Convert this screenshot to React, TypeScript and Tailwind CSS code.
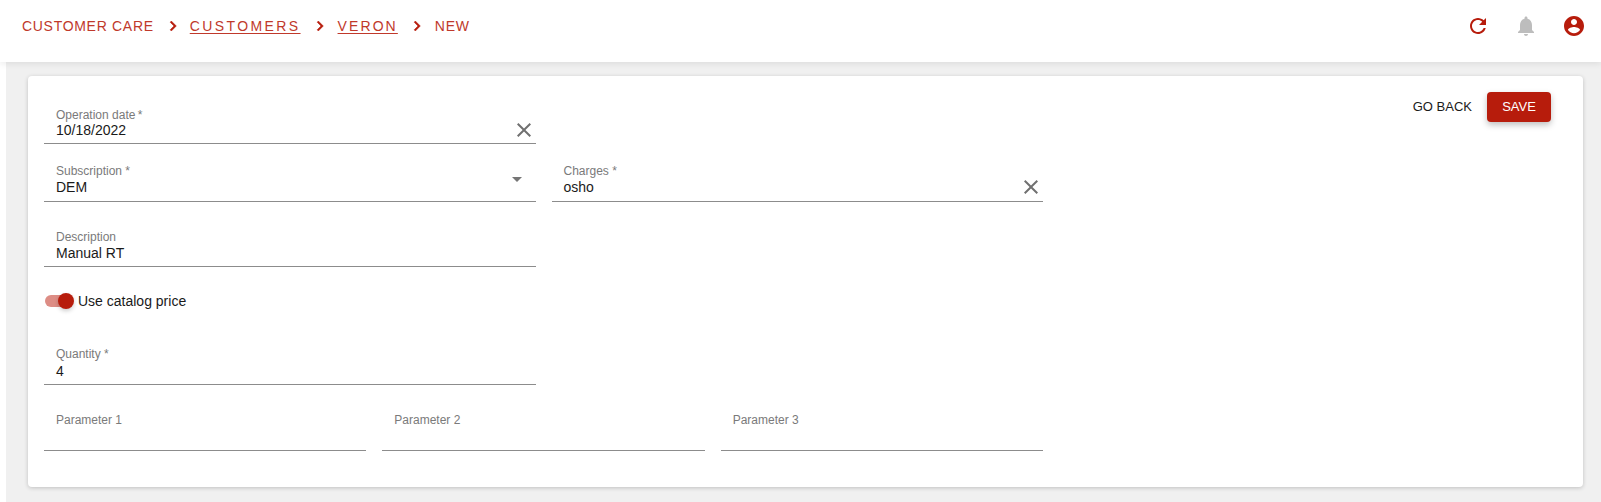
import React from "react";

function Icon({ d, className }: { d: string; className: string }) {
  return (
    <svg viewBox="0 0 24 24" className={className} fill="currentColor" aria-hidden="true">
      <path d={d} />
    </svg>
  );
}

const CLOSE = "M19 6.41L17.59 5 12 10.59 6.41 5 5 6.41 10.59 12 5 17.59 6.41 19 12 13.41 17.59 19 19 17.59 13.41 12z";
const NEXT = "M10 6L8.59 7.41 13.17 12l-4.58 4.59L10 18l6-6z";
const REFRESH = "M17.65 6.35C16.2 4.9 14.21 4 12 4c-4.42 0-7.99 3.58-7.99 8s3.57 8 7.99 8c3.73 0 6.84-2.55 7.73-6h-2.08c-.82 2.33-3.04 4-5.65 4-3.31 0-6-2.69-6-6s2.69-6 6-6c1.66 0 3.14.69 4.22 1.78L13 11h7V4l-2.35 2.35z";
const BELL = "M12 22c1.1 0 2-.9 2-2h-4c0 1.1.89 2 2 2zm6-6v-5c0-3.07-1.64-5.64-4.5-6.32V4c0-.83-.67-1.5-1.5-1.5s-1.5.67-1.5 1.5v.68C7.63 5.36 6 7.92 6 11v5l-2 2v1h16v-1l-2-2z";
const ACCOUNT = "M12 2C6.48 2 2 6.48 2 12s4.48 10 10 10 10-4.48 10-10S17.52 2 12 2zm0 3c1.66 0 3 1.34 3 3s-1.34 3-3 3-3-1.34-3-3 1.34-3 3-3zm0 14.2c-2.5 0-4.71-1.28-6-3.22.03-1.99 4-3.08 6-3.08 1.99 0 5.97 1.09 6 3.08-1.29 1.94-3.5 3.22-6 3.22z";

function Field({
  label,
  value,
  trailing,
  colClass,
  labelClass,
}: {
  label: string;
  value?: string;
  trailing?: React.ReactNode;
  colClass: string;
  labelClass: string;
}) {
  return (
    <div className="flex items-end justify-between border-b border-[#8c8c8c] pl-3">
      <div className={`flex min-w-0 flex-col ${colClass}`}>
        <span className={`h-[14px] text-[12px] leading-[14px] text-[#7a7a7a] ${labelClass}`}>{label}</span>
        <span className="h-[16px] text-[14px] leading-[16px] text-[#1a1a1a]">{value}</span>
      </div>
      {trailing}
    </div>
  );
}

const Chevron = ({ className }: { className: string }) => (
  <Icon d={NEXT} className={`h-5 w-5 shrink-0 stroke-[#b71c0c] stroke-[0.6px] text-[#b71c0c] ${className}`} />
);

export default function App() {
  return (
    <div className="flex h-[502px] w-full flex-col overflow-hidden bg-white font-['Liberation_Sans',Arial,sans-serif]">
      <header className="relative z-10 flex h-[62px] shrink-0 items-start justify-between bg-white pl-[22px] pr-[15px] pt-[14px] shadow-[0_2px_6px_rgba(0,0,0,0.08)]">
        <nav className="flex h-6 items-center text-[14px] text-[#c0392b]">
          <span className="tracking-[0.7px]">CUSTOMER CARE</span>
          <Chevron className="ml-[9px] mr-[7px]" />
          <span className="tracking-[2.4px] underline underline-offset-2">CUSTOMERS</span>
          <Chevron className="ml-[9px] mr-[8px]" />
          <span className="tracking-[2.1px] underline underline-offset-2">VERON</span>
          <Chevron className="ml-[9px] mr-[8px]" />
          <span className="tracking-[0.7px]">NEW</span>
        </nav>
        <div className="flex items-center gap-[24px]">
          <Icon d={REFRESH} className="h-6 w-6 text-[#b71c0c]" />
          <Icon d={BELL} className="h-6 w-6 text-[#bdbdbd]" />
          <Icon d={ACCOUNT} className="h-6 w-6 text-[#b71c0c]" />
        </div>
      </header>
      <main className="ml-[6px] flex-1 bg-[#f0f0f0] pb-[15px] pl-[22px] pr-[18px] pt-[14px]">
        <div className="flex h-full justify-between rounded bg-white pl-4 pr-[32px] pt-4 shadow-[0_1px_4px_rgba(0,0,0,0.2)]">
          <div className="flex w-[999px] flex-col pt-4">
            <div className="w-[492px]">
              <Field
                label={"Operation date\u2009*"}
                value="10/18/2022"
                colClass="pb-[5px]"
                labelClass="mb-0"
                trailing={<Icon d={CLOSE} className="mb-[1px] h-6 w-6 text-[#707070]" />}
              />
            </div>
            <div className="mt-[20px] grid grid-cols-2 gap-4">
              <Field
                label="Subscription *"
                value="DEM"
                colClass="pb-[6px]"
                labelClass="mb-[1px]"
                trailing={<Icon d="M7 10l5 5 5-5z" className="mb-[10px] mr-[7px] h-6 w-6 text-[#757575]" />}
              />
              <Field
                label="Charges *"
                value="osho"
                colClass="pb-[6px]"
                labelClass="mb-[1px]"
                trailing={<Icon d={CLOSE} className="mb-[2px] h-6 w-6 text-[#707070]" />}
              />
            </div>
            <div className="mt-[28px] w-[492px]">
              <Field label="Description" value="Manual RT" colClass="pb-[5px]" labelClass="mb-[1px]" />
            </div>
            <div className="mt-[22px] flex h-[24px] items-center">
              <div className="relative ml-[1px] h-[12px] w-[26px] rounded-full bg-[#dd8d85]">
                <div className="absolute -right-[3px] -top-[2px] h-4 w-4 rounded-full bg-[#b71c0c] shadow-[0_2px_4px_rgba(0,0,0,0.2)]" />
              </div>
              <span className="ml-[7px] text-[14px] text-[#1a1a1a]">Use catalog price</span>
            </div>
            <div className="mt-[34px] w-[492px]">
              <Field label="Quantity *" value="4" colClass="pb-[5px]" labelClass="mb-[2px]" />
            </div>
            <div className="mt-[28px] grid grid-cols-3 gap-4">
              <Field label="Parameter 1" colClass="pb-[5px]" labelClass="mb-[2px]" />
              <Field label="Parameter 2" colClass="pb-[5px]" labelClass="mb-[2px]" />
              <Field label="Parameter 3" colClass="pb-[5px]" labelClass="mb-[2px]" />
            </div>
          </div>
          <div className="flex h-[30px] items-center gap-[15px]">
            <span className="text-[13px] text-[#1a1a1a]">GO BACK</span>
            <button className="h-[30px] w-[64px] rounded bg-[#b71c0c] text-[13px] text-white shadow-[0_3px_6px_rgba(0,0,0,0.25)]">SAVE</button>
          </div>
        </div>
      </main>
    </div>
  );
}
